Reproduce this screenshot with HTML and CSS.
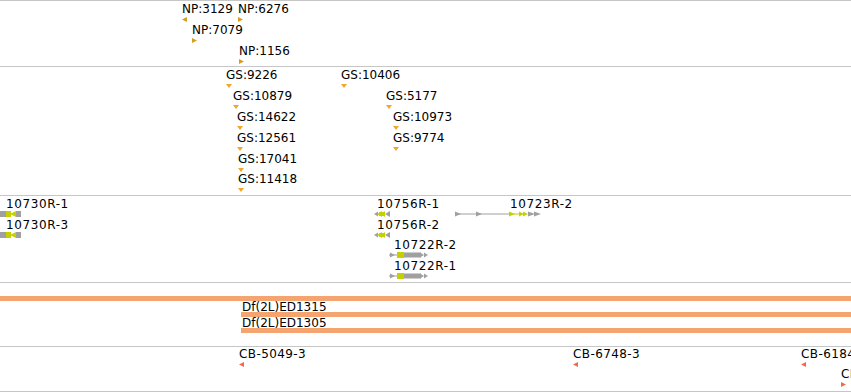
FILE: index.html
```html
<!DOCTYPE html>
<html lang="en">

<head>
    <meta charset="UTF-8">
    <title>Tracks</title>
    <link rel="stylesheet" href="styles.css">
</head>

<body>
    <div class="panel">
        <!-- NP -->
        <div class="track track-np">
            <div class="feat" style="left:182px;top:2px"><span class="label">NP:3129</span><i class="tri tri-left np"></i></div>
            <div class="feat" style="left:238px;top:2px"><span class="label">NP:6276</span><i class="tri tri-right np"></i></div>
            <div class="feat" style="left:192px;top:23px"><span class="label">NP:7079</span><i class="tri tri-right np"></i></div>
            <div class="feat" style="left:239px;top:44px"><span class="label">NP:1156</span><i class="tri tri-right np"></i></div>
        </div>

        <!-- GS -->
        <div class="track track-gs">
            <div class="feat" style="left:226px;top:2px"><span class="label">GS:9226</span><i class="tri tri-down gs"></i></div>
            <div class="feat" style="left:341px;top:2px"><span class="label">GS:10406</span><i class="tri tri-down gs"></i></div>
            <div class="feat" style="left:233px;top:23px"><span class="label">GS:10879</span><i class="tri tri-down gs"></i></div>
            <div class="feat" style="left:386px;top:23px"><span class="label">GS:5177</span><i class="tri tri-down gs"></i></div>
            <div class="feat" style="left:237px;top:44px"><span class="label">GS:14622</span><i class="tri tri-down gs"></i></div>
            <div class="feat" style="left:393px;top:44px"><span class="label">GS:10973</span><i class="tri tri-down gs"></i></div>
            <div class="feat" style="left:237px;top:65px"><span class="label">GS:12561</span><i class="tri tri-down gs"></i></div>
            <div class="feat" style="left:393px;top:65px"><span class="label">GS:9774</span><i class="tri tri-down gs"></i></div>
            <div class="feat" style="left:238px;top:86px"><span class="label">GS:17041</span><i class="tri tri-down gs"></i></div>
            <div class="feat" style="left:238px;top:106px"><span class="label">GS:11418</span><i class="tri tri-down gs"></i></div>
        </div>

        <!-- genes -->
        <div class="track track-gene">
            <div class="feat" style="left:0;top:2px">
                <span class="label" style="margin-left:6px">10730R-1</span>
                <svg class="glyph" width="21" height="6">
                    <rect x="0" y="0" width="6" height="6" class="g-grey" />
                    <rect x="6" y="0" width="5" height="6" class="g-cds" />
                    <polygon points="10,3 16,0 16,6" class="g-cds" />
                    <rect x="16" y="0" width="5" height="6" class="g-grey" />
                </svg>
            </div>
            <div class="feat" style="left:0;top:23px">
                <span class="label" style="margin-left:6px">10730R-3</span>
                <svg class="glyph" width="21" height="6">
                    <rect x="0" y="0" width="6" height="6" class="g-grey" />
                    <rect x="6" y="0" width="5" height="6" class="g-cds" />
                    <polygon points="10,3 16,0 16,6" class="g-cds" />
                    <rect x="16" y="0" width="5" height="6" class="g-grey" />
                </svg>
            </div>
            <div class="feat" style="left:374px;top:2px">
                <span class="label" style="margin-left:3px">10756R-1</span>
                <svg class="glyph" width="17" height="6">
                    <polygon points="0,3 4,0.5 4,5.5" class="g-grey" />
                    <rect x="5" y="1" width="6" height="4" class="g-cds" />
                    <polygon points="3,3 8,0 8,6" class="g-cds" />
                    <polygon points="7,3 11,0 11,6" class="g-cds" />
                    <polygon points="11,3 16,0 16,6" class="g-grey" />
                </svg>
            </div>
            <div class="feat" style="left:374px;top:23px">
                <span class="label" style="margin-left:3px">10756R-2</span>
                <svg class="glyph" width="17" height="6">
                    <polygon points="0,3 4,0.5 4,5.5" class="g-grey" />
                    <rect x="5" y="1" width="6" height="4" class="g-cds" />
                    <polygon points="3,3 8,0 8,6" class="g-cds" />
                    <polygon points="7,3 11,0 11,6" class="g-cds" />
                    <polygon points="11,3 16,0 16,6" class="g-grey" />
                </svg>
            </div>
            <div class="feat" style="left:389px;top:43px">
                <span class="label" style="margin-left:5px">10722R-2</span>
                <svg class="glyph" width="40" height="6">
                    <line x1="0" y1="3" x2="8" y2="3" class="g-line" />
                    <polygon points="1,0.5 6,3 1,5.5" class="g-grey" />
                    <rect x="8" y="0" width="7" height="6" class="g-cds" />
                    <rect x="15" y="0.5" width="17" height="5" class="g-grey" />
                    <polygon points="31,0.5 35,3 31,5.5" class="g-grey" />
                    <polygon points="35,0.5 39,3 35,5.5" class="g-grey" />
                </svg>
            </div>
            <div class="feat" style="left:389px;top:64px">
                <span class="label" style="margin-left:5px">10722R-1</span>
                <svg class="glyph" width="40" height="6">
                    <line x1="0" y1="3" x2="8" y2="3" class="g-line" />
                    <polygon points="1,0.5 6,3 1,5.5" class="g-grey" />
                    <rect x="8" y="0" width="7" height="6" class="g-cds" />
                    <rect x="15" y="0.5" width="17" height="5" class="g-grey" />
                    <polygon points="31,0.5 35,3 31,5.5" class="g-grey" />
                    <polygon points="35,0.5 39,3 35,5.5" class="g-grey" />
                </svg>
            </div>
            <div class="feat" style="left:455px;top:2px">
                <span class="label" style="margin-left:55px">10723R-2</span>
                <svg class="glyph" width="87" height="6">
                    <line x1="0" y1="3" x2="54" y2="3" class="g-line" />
                    <polygon points="0,0.5 6,3 0,5.5" class="g-grey" />
                    <polygon points="21,0.5 27,3 21,5.5" class="g-grey" />
                    <line x1="54" y1="3" x2="66" y2="3" class="g-line-cds" />
                    <polygon points="54,0.5 60,3 54,5.5" class="g-cds" />
                    <polygon points="64,0.5 69,3 64,5.5" class="g-cds" />
                    <polygon points="68,0.5 73,3 68,5.5" class="g-cds" />
                    <polygon points="73,0.5 80,3 73,5.5" class="g-grey" />
                    <polygon points="79,0.5 86,3 79,5.5" class="g-grey" />
                </svg>
            </div>
        </div>

        <!-- deficiencies -->
        <div class="track track-df">
            <div class="feat feat-df" style="left:0;right:0;top:13px"><i class="bar"></i></div>
            <div class="feat feat-df" style="left:241px;right:0;top:19px"><span class="label">Df(2L)ED1315</span><i class="bar"></i></div>
            <div class="feat feat-df" style="left:241px;right:0;top:35px"><span class="label">Df(2L)ED1305</span><i class="bar"></i></div>
        </div>

        <!-- CB -->
        <div class="track track-cb">
            <div class="feat" style="left:239px;top:1px"><span class="label">CB-5049-3</span><i class="tri tri-left cb"></i></div>
            <div class="feat" style="left:573px;top:1px"><span class="label">CB-6748-3</span><i class="tri tri-left cb"></i></div>
            <div class="feat" style="left:801px;top:1px"><span class="label">CB-6184-3</span><i class="tri tri-left cb"></i></div>
            <div class="feat" style="left:841px;top:21px"><span class="label">CB-6219-3</span><i class="tri tri-right cb"></i></div>
        </div>
    </div>
</body>

</html>
```

FILE: styles.css
```css
body {
    margin: 0;
    background: #fff;
    overflow: hidden;
    font-family: "DejaVu Sans", sans-serif;
}

.panel {
    width: 851px;
    border-top: 1px solid #c6c6c6;
}

.track {
    position: relative;
    overflow: hidden;
    border-bottom: 1px solid #c6c6c6;
}

.track-np {
    height: 65px;
}

.track-gs {
    height: 128px;
}

.track-gene {
    height: 86px;
}

.track-df {
    height: 63px;
}

.track-cb {
    height: 44px;
}

.feat {
    position: absolute;
    display: flex;
    flex-direction: column;
    align-items: flex-start;
}

.label {
    font-size: 12px;
    line-height: 13px;
    color: #000;
    white-space: nowrap;
}

.track-gene .label {
    letter-spacing: .6px;
}

.track-cb .label {
    letter-spacing: .4px;
}

.tri {
    display: block;
    width: 5px;
    height: 5px;
    margin-top: 1px;
}

.tri-left {
    clip-path: polygon(100% 0, 0 50%, 100% 100%);
}

.tri-right {
    clip-path: polygon(0 0, 100% 50%, 0 100%);
}

.tri-down {
    width: 6px;
    height: 4px;
    margin-top: 2px;
    clip-path: polygon(0 0, 100% 0, 50% 100%);
}

.np {
    background: #d69e1c;
}

.gs {
    background: #f2a62a;
}

.cb {
    background: #f26a4c;
}

.glyph {
    display: block;
}

.g-grey {
    fill: #a0a0a0;
}

.g-cds {
    fill: #c4d000;
}

.g-line {
    stroke: #a0a0a0;
    stroke-width: 1;
}

.g-line-cds {
    stroke: #c4d000;
    stroke-width: 1;
}

.feat-df {
    align-items: stretch;
}

.feat-df .label {
    line-height: 10px;
    margin-left: 1px;
}

.bar {
    display: block;
    height: 5px;
    background: #f5a36f;
}
```
